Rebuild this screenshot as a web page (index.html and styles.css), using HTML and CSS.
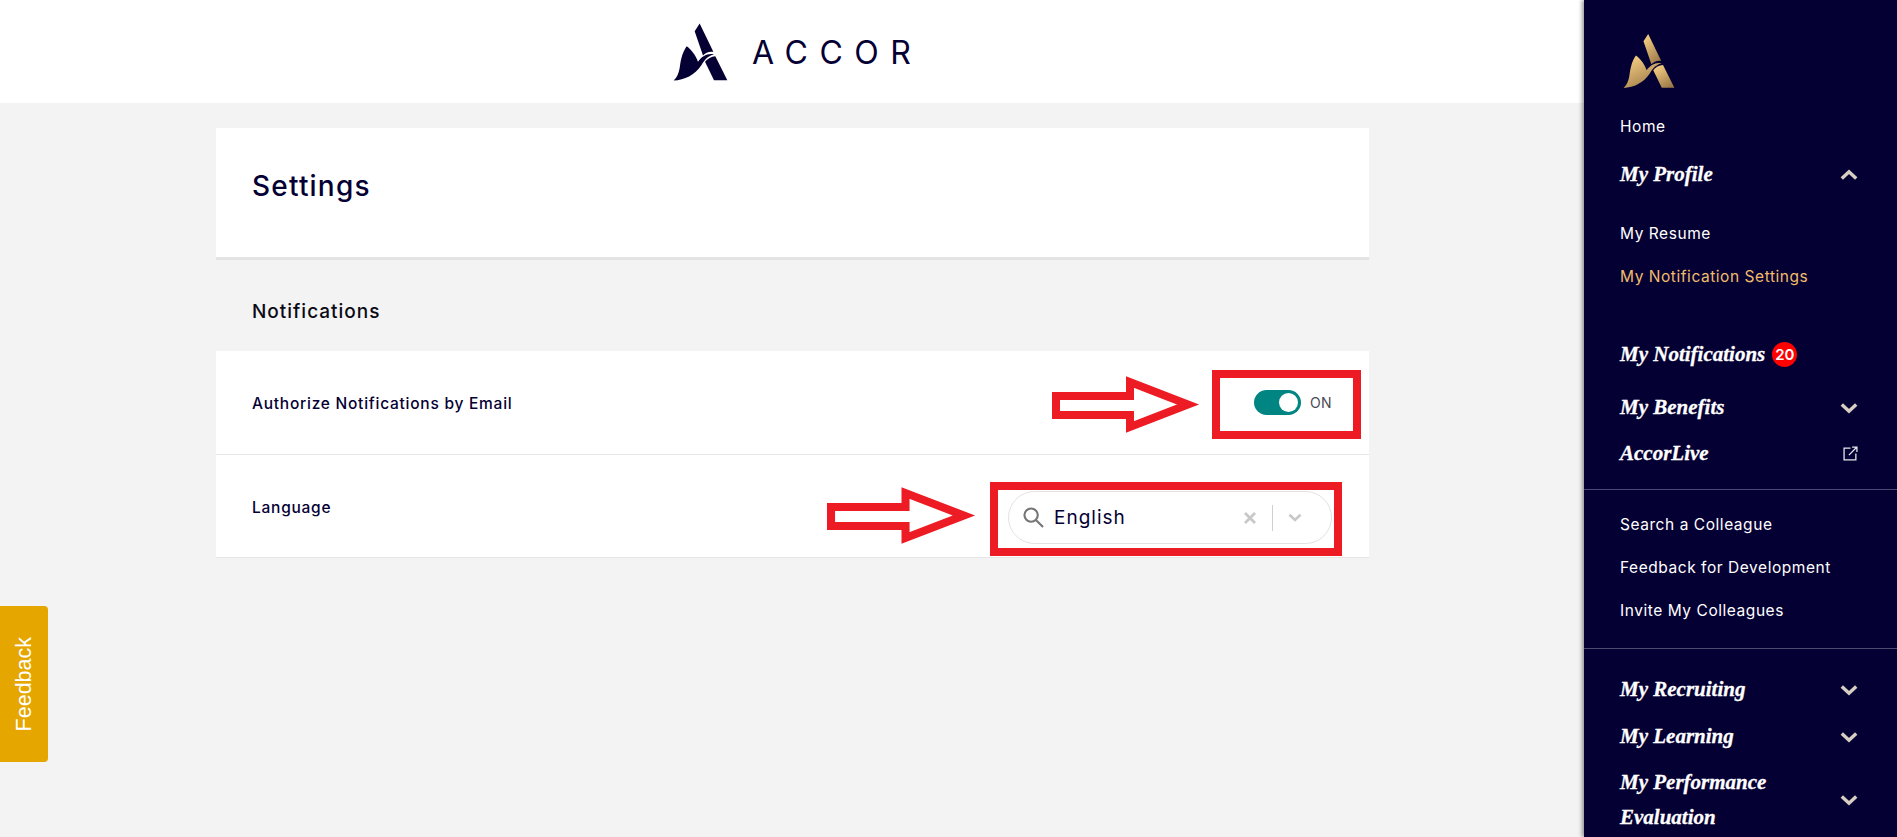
FILE: index.html
```html
<!DOCTYPE html>
<html lang="en">
<head>
  <meta charset="UTF-8" />
  <title>Settings</title>
  <link rel="stylesheet" href="styles.css">
</head>
<body>
  <svg class="defs" width="0" height="0" aria-hidden="true">
    <defs>
      <linearGradient id="gold" x1="0.2" y1="0" x2="0.8" y2="1">
        <stop offset="0" stop-color="#f8d084" />
        <stop offset="1" stop-color="#9a7747" />
      </linearGradient>
      <symbol id="accor-mark" viewBox="95 65 165 175">
        <path d="M175 67 L216 152 C203 150 192 155 185 163 L160 90 Z" />
        <path d="M222 165 L258 237 L218 237 L191 182 C198 172 210 166 222 165 Z" />
        <path d="M97 238 C118 218 114 192 120 172 C123 157 130 144 136 135 C150 145 164 163 170 182 C180 166 200 155 218 160 C200 164 190 176 180 192 C160 222 130 236 97 238 Z" />
      </symbol>
      <symbol id="chevron" viewBox="0 0 20 13">
        <polyline points="2,2.5 10,10 18,2.5" fill="none" stroke="currentColor" stroke-width="3.8" />
      </symbol>
      <symbol id="red-arrow" viewBox="0 0 148 57" preserveAspectRatio="none">
        <path d="M4 20 H78 V6 L136 28.5 L78 51 V39 H4 Z" fill="#fff" stroke="#ed1c24" stroke-width="8" />
      </symbol>
    </defs>
  </svg>

  <div class="page">
    <main class="main">
      <header class="top-bar">
        <svg class="top-logo" fill="#050033"><use href="#accor-mark" /></svg>
        <span class="wordmark">ACCOR</span>
      </header>

      <div class="content">
        <section class="title-card">
          <h1>Settings</h1>
        </section>

        <h2>Notifications</h2>

        <div class="setting-row">
          <span class="setting-label">Authorize Notifications by Email</span>
          <div class="toggle-wrap">
            <span class="toggle"><span class="knob"></span></span>
            <span class="toggle-text">ON</span>
          </div>
          <svg class="arrow arrow-one"><use href="#red-arrow" /></svg>
          <div class="red-box red-box-one"></div>
        </div>

        <div class="setting-row">
          <span class="setting-label">Language</span>
          <div class="lang-select">
            <svg class="search-icon" viewBox="0 0 22 22" fill="none" stroke="#757575" stroke-width="2.2">
              <circle cx="8.5" cy="8.5" r="7" />
              <path d="M13.5 13.5 L21 21" />
            </svg>
            <span class="lang-value">English</span>
            <svg class="clear-icon" viewBox="0 0 12 12" stroke="#c8c8c8" stroke-width="2.8">
              <path d="M1 1 L11 11 M11 1 L1 11" />
            </svg>
            <span class="select-sep"></span>
            <svg class="select-chevron"><use href="#chevron" /></svg>
          </div>
          <svg class="arrow arrow-two"><use href="#red-arrow" /></svg>
          <div class="red-box red-box-two"></div>
        </div>
      </div>

      <div class="feedback-tab"><span>Feedback</span></div>
    </main>

    <aside class="sidebar">
      <svg class="side-logo" fill="url(#gold)"><use href="#accor-mark" /></svg>

      <a class="side-link link-home">Home</a>

      <div class="side-head head-profile">
        <span>My Profile</span>
        <svg class="chevron chevron-up"><use href="#chevron" /></svg>
      </div>
      <a class="side-link link-resume">My Resume</a>
      <a class="side-link link-active">My Notification Settings</a>

      <div class="side-head head-notif">
        <span>My Notifications</span>
        <span class="badge">20</span>
      </div>
      <div class="side-head head-benefits">
        <span>My Benefits</span>
        <svg class="chevron"><use href="#chevron" /></svg>
      </div>
      <div class="side-head">
        <span>AccorLive</span>
        <svg class="ext-icon" viewBox="0 0 14 14" fill="none" stroke="#e8e8ee" stroke-width="1.2">
          <path d="M7 2 H1 V13 H12 V7" />
          <path d="M5.5 8.5 L13 1 M8.5 1 H13 V5.5" />
        </svg>
      </div>

      <hr class="side-rule rule-one" />

      <a class="side-link link-search">Search a Colleague</a>
      <a class="side-link link-gap">Feedback for Development</a>
      <a class="side-link link-gap">Invite My Colleagues</a>

      <hr class="side-rule rule-two" />

      <div class="side-head head-recruiting">
        <span>My Recruiting</span>
        <svg class="chevron"><use href="#chevron" /></svg>
      </div>
      <div class="side-head head-learning">
        <span>My Learning</span>
        <svg class="chevron"><use href="#chevron" /></svg>
      </div>
      <div class="side-head">
        <span>My Performance<br />Evaluation</span>
        <svg class="chevron"><use href="#chevron" /></svg>
      </div>
    </aside>
  </div>
</body>
</html>
```

FILE: styles.css
```css
html, body {
  height: 100%;
  margin: 0;
  overflow: hidden;
}

body {
  font-family: Inter, 'Open Sans', sans-serif;
  background: #f3f3f3;
  color: #050033;
}

.defs {
  position: absolute;
}

.page {
  display: flex;
  height: 100vh;
}

.main {
  flex: 1;
  min-width: 0;
  position: relative;
}

.top-bar {
  height: 103px;
  background: #fff;
  display: flex;
  justify-content: center;
  align-items: center;
  gap: 24px;
}

.top-logo {
  width: 55px;
  height: 60px;
}

.wordmark {
  font-size: 32px;
  font-weight: 400;
  letter-spacing: 11.5px;
  margin-right: -11.5px;
  margin-top: 2px;
  color: #050033;
}

.content {
  width: 1153px;
  margin: 25px 0 0 216px;
}

.title-card {
  height: 129px;
  background: #fff;
  border-bottom: 3px solid #e4e4e4;
  padding-left: 36px;
  display: flex;
  align-items: center;
}

h1 {
  margin: 0 0 14px;
  font-size: 28px;
  font-weight: 500;
  letter-spacing: 1.2px;
}

h2 {
  margin: 0;
  height: 91px;
  padding: 11px 0 0 36px;
  box-sizing: border-box;
  display: flex;
  align-items: center;
  font-size: 19px;
  font-weight: 500;
  letter-spacing: 1px;
  color: #0a0a14;
}

.setting-row {
  position: relative;
  height: 103px;
  background: #fff;
  border-bottom: 1px solid #e6e6e6;
  padding: 0 37px 0 36px;
  display: flex;
  justify-content: space-between;
  align-items: center;
}

.setting-row + .setting-row {
  height: 102px;
}

.setting-label {
  font-size: 15.5px;
  font-weight: 500;
  letter-spacing: 0.75px;
  margin-top: 2px;
}

.toggle-wrap {
  display: flex;
  align-items: center;
  gap: 9px;
}

.toggle {
  width: 47px;
  height: 25px;
  border-radius: 13px;
  background: #008583;
  display: flex;
  justify-content: flex-end;
  align-items: center;
  padding-right: 3px;
  box-sizing: border-box;
}

.knob {
  width: 19px;
  height: 19px;
  border-radius: 50%;
  background: #fff;
}

.toggle-text {
  font-size: 14px;
  letter-spacing: 0.4px;
  color: #4a4a55;
}

.lang-select {
  box-sizing: border-box;
  width: 324px;
  height: 53px;
  margin: 23px 0 0 0;
  border: 1px solid #e2e2e2;
  border-radius: 27px;
  display: flex;
  align-items: center;
  padding-left: 14px;
  background: #fff;
}

.search-icon {
  width: 21px;
  height: 21px;
  flex: none;
}

.lang-value {
  flex: 1;
  margin-left: 10px;
  font-size: 19px;
  letter-spacing: 1px;
}

.clear-icon {
  width: 12px;
  height: 12px;
  flex: none;
}

.select-sep {
  width: 1px;
  height: 26px;
  background: #d0d0d0;
  margin: 0 15px 0 16px;
}

.select-chevron {
  width: 14px;
  height: 9px;
  color: #c8c8c8;
  margin-right: 29px;
}

.red-box {
  position: absolute;
  box-sizing: border-box;
  border: 8px solid #ed1c24;
}

.red-box-one {
  top: 19px;
  right: 8px;
  width: 149px;
  height: 69px;
}

.red-box-two {
  top: 27px;
  right: 27px;
  width: 352px;
  height: 74px;
}

.arrow {
  position: absolute;
  height: 57px;
}

.arrow-one {
  left: 836px;
  top: 25px;
  width: 148px;
}

.arrow-two {
  left: 611px;
  top: 32px;
  width: 149px;
}

.feedback-tab {
  position: absolute;
  left: 0;
  top: 606px;
  width: 48px;
  height: 156px;
  background: #e6a600;
  border-radius: 0 4px 4px 0;
  display: flex;
  justify-content: center;
  align-items: center;
}

.feedback-tab span {
  writing-mode: vertical-rl;
  transform: rotate(180deg);
  font-family: 'Liberation Sans', sans-serif;
  font-size: 21.5px;
  color: #fff;
}

.sidebar {
  width: 313px;
  flex: none;
  box-sizing: border-box;
  height: 100vh;
  background: #050033;
  box-shadow: -2px 0 4px rgba(0, 0, 0, 0.4);
  padding-top: 33px;
  position: relative;
  color: #fff;
}

.side-logo {
  display: block;
  width: 52px;
  height: 56px;
  margin-left: 39px;
}

.side-link {
  display: block;
  height: 20px;
  line-height: 20px;
  margin-left: 36px;
  font-size: 15.5px;
  color: #fff;
  letter-spacing: 0.55px;
}

.link-home { margin-top: 28px; }
.link-resume { margin-top: 32px; }
.link-active { margin-top: 23px; color: #f1bd6c; }
.link-search { margin-top: 25px; }
.link-gap { margin-top: 23px; }

.side-head {
  display: flex;
  justify-content: space-between;
  align-items: center;
  margin: 11px 39px 0 36px;
  font-family: 'Liberation Serif', serif;
  font-style: italic;
  font-weight: 700;
  font-size: 21px;
  line-height: 35px;
  -webkit-text-stroke: 0.3px #fff;
}

.head-profile { margin-top: 20px; }
.head-notif { margin-top: 50px; justify-content: flex-start; gap: 7px; }
.head-benefits { margin-top: 18px; }
.head-recruiting { margin-top: 23px; }
.head-learning { margin-top: 12px; }

.badge {
  width: 25px;
  height: 25px;
  border-radius: 50%;
  background: #f00;
  font-family: Inter, sans-serif;
  font-style: normal;
  font-weight: 600;
  font-size: 15px;
  line-height: 25px;
  text-align: center;
  -webkit-text-stroke: 0;
}

.chevron {
  width: 18px;
  height: 12px;
  color: #d6cfc2;
  flex: none;
}

.chevron-up {
  transform: scaleY(-1);
}

.ext-icon {
  width: 15px;
  height: 15px;
  flex: none;
}

.side-rule {
  border: 0;
  height: 1px;
  background: #4c4a70;
  margin: 0;
}

.rule-one { margin-top: 18px; }
.rule-two { margin-top: 27px; }
```
